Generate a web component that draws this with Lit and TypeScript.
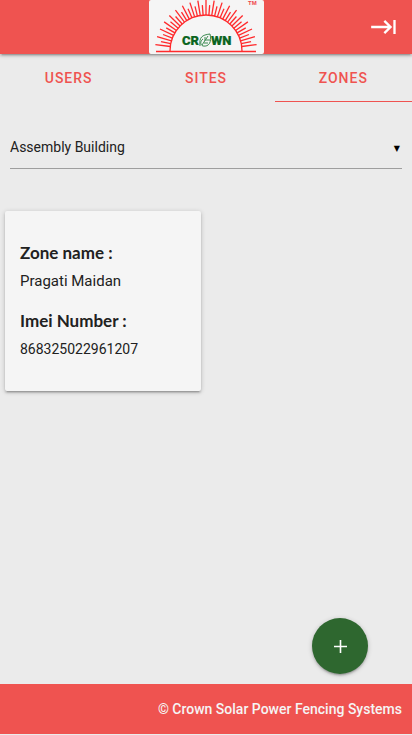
import { LitElement, html, css, svg } from "lit";
import { customElement, property, state } from "lit/decorators.js";
import { classMap } from "lit/directives/class-map.js";

const RAYS = Array.from({ length: 37 }, (_, i) => {
  const angle = Math.PI * (0.04 + (0.92 * i) / 36);
  const outer = i % 2 === 0 ? 51 : 46;
  return {
    x1: 57 - 36 * Math.cos(angle),
    y1: 51 - 36 * Math.sin(angle),
    x2: 57 - outer * Math.cos(angle),
    y2: 51 - outer * Math.sin(angle),
  };
});

@customElement("crown-logo")
export class CrownLogo extends LitElement {
  static styles = css`
    :host { display: block; }
    .logo { display: block; width: 115px; height: 54px; border-radius: 2px; background: #f5f5f5; }
    .rays { stroke: #ff2a2c; stroke-width: 1.3; fill: none; }
    .name { font: 900 13px Roboto, sans-serif; fill: #0b6420; stroke: #0b6420; stroke-width: 0.2; }
    .mark { font: 700 6px "Liberation Sans", sans-serif; fill: #f0474a; }
    .leaf { stroke: #3b8a50; stroke-width: 1; fill: none; }
  `;

  render() {
    return html`
      <svg class="logo" viewBox="0 0 115 54" role="img" aria-label="Crown">
        <g class="rays">
          <path d="M21 51 A36 36 0 0 1 93 51" />
          <path d="M7 51.5H107" />
          ${RAYS.map((r) => svg`<line x1=${r.x1} y1=${r.y1} x2=${r.x2} y2=${r.y2} />`)}
        </g>
        <text class="name" x="33" y="45">CR</text>
        <g class="leaf">
          <path d="M51 46C50 37 53 35 61 34C63 42 60 47 54 46C51 45 51 41 54 39M53 45L59 36M56 41V37M57 40H61M55 43H59" />
        </g>
        <text class="name" x="62" y="45">WN</text>
        <text class="mark" x="99" y="5">TM</text>
      </svg>
    `;
  }
}

@customElement("zone-card")
export class ZoneCard extends LitElement {
  @property() name = "";
  @property() imei = "";

  static styles = css`
    :host {
      display: block;
      box-sizing: border-box;
      padding: 28px 15px;
      border-radius: 2px;
      background: #f5f5f5;
      box-shadow: 0 2px 2px rgba(0, 0, 0, 0.14), 0 3px 1px -2px rgba(0, 0, 0, 0.12), 0 1px 5px rgba(0, 0, 0, 0.2);
    }
    .fields { margin: 0; color: #212121; }
    .label { font: 700 17px/28px Lato, sans-serif; }
    .value { margin: 0 0 12px; font: 400 15px/28px Roboto, sans-serif; }
    .number { margin: 0; font-size: 14px; }
  `;

  render() {
    return html`
      <dl class="fields">
        <dt class="label">Zone name :</dt>
        <dd class="value">${this.name}</dd>
        <dt class="label">Imei Number :</dt>
        <dd class="value number">${this.imei}</dd>
      </dl>
    `;
  }
}

@customElement("app-root")
export class AppRoot extends LitElement {
  @state() private tab = "Zones";

  static styles = css`
    :host {
      display: flex;
      flex-direction: column;
      box-sizing: border-box;
      min-height: 100vh;
      padding-bottom: 1px;
      background: #ebebeb;
      font-family: Roboto, sans-serif;
      color: #212121;
    }
    .bar {
      display: grid;
      grid-template-columns: 1fr auto 1fr;
      align-items: center;
      height: 54px;
      background: #ef5350;
      box-shadow: 0 2px 2px rgba(0, 0, 0, 0.14), 0 3px 1px -2px rgba(0, 0, 0, 0.12), 0 1px 5px rgba(0, 0, 0, 0.2);
    }
    .home { grid-column: 2; }
    .logout {
      justify-self: end;
      margin-right: 14px;
      padding: 0;
      border: 0;
      background: none;
      color: #fff;
      cursor: pointer;
    }
    .icon { display: block; fill: currentColor; }
    .tabs { display: flex; }
    .tab {
      flex: 1;
      height: 48px;
      padding: 0;
      border: 0;
      border-bottom: 1px solid transparent;
      background: none;
      color: #ef5350;
      font: 500 14px/48px Roboto, sans-serif;
      letter-spacing: 1px;
      text-transform: uppercase;
      cursor: pointer;
    }
    .active { border-bottom-color: #ef5350; }
    .content { flex: 1; }
    .picker {
      display: grid;
      margin: 24px 10px 0;
      border-bottom: 1px solid #9e9e9e;
    }
    .select, .arrow { grid-area: 1 / 1; }
    .select {
      appearance: none;
      height: 42px;
      padding: 0;
      border: 0;
      background: none;
      color: inherit;
      font: 400 14px Roboto, sans-serif;
    }
    .arrow {
      place-self: center end;
      padding: 4px 2px 0 0;
      color: #000;
      font: 8px/12px "DejaVu Sans", sans-serif;
      pointer-events: none;
    }
    .cards {
      display: grid;
      grid-template-columns: 1fr 1fr;
      gap: 10px;
      margin: 42px 0 10px;
      padding: 0 5px;
    }
    .add {
      position: fixed;
      right: 44px;
      bottom: 61px;
      display: grid;
      place-items: center;
      width: 56px;
      height: 56px;
      padding: 0;
      border: 0;
      border-radius: 50%;
      background: #2e672f;
      color: #fff;
      box-shadow: 0 2px 2px rgba(0, 0, 0, 0.14), 0 3px 1px -2px rgba(0, 0, 0, 0.12), 0 1px 5px rgba(0, 0, 0, 0.2);
      cursor: pointer;
    }
    .plus { display: block; stroke: currentColor; stroke-width: 1.6; }
    .footer {
      padding: 0 10px;
      background: #ef5350;
      color: #f5f5f5;
      font: 500 14px/50px Roboto, sans-serif;
      text-align: right;
    }
  `;

  render() {
    return html`
      <header class="bar">
        <crown-logo class="home"></crown-logo>
        <button class="logout" aria-label="Log out">
          <svg class="icon" width="28" height="28" viewBox="0 0 24 24">
            <path d="M11.59 7.41L15.17 11H1v2h14.17l-3.59 3.59L13 18l6-6-6-6-1.41 1.41zM20 6v12h2V6h-2z" />
          </svg>
        </button>
      </header>
      <nav class="tabs">
        ${["Users", "Sites", "Zones"].map(
          (name) => html`<button
            class=${classMap({ tab: true, active: this.tab === name })}
            @click=${() => (this.tab = name)}
          >${name}</button>`
        )}
      </nav>
      <main class="content">
        <div class="picker">
          <select class="select" aria-label="Site">
            <option>Assembly Building</option>
          </select>
          <span class="arrow" aria-hidden="true">▼</span>
        </div>
        <section class="cards">
          <zone-card name="Pragati Maidan" imei="868325022961207"></zone-card>
        </section>
      </main>
      <button class="add" aria-label="Add zone">
        <svg class="plus" width="14" height="14" viewBox="0 0 14 14">
          <path d="M7.5 1v13M1 7.5h13" />
        </svg>
      </button>
      <footer class="footer">© Crown Solar Power Fencing Systems</footer>
    `;
  }
}
